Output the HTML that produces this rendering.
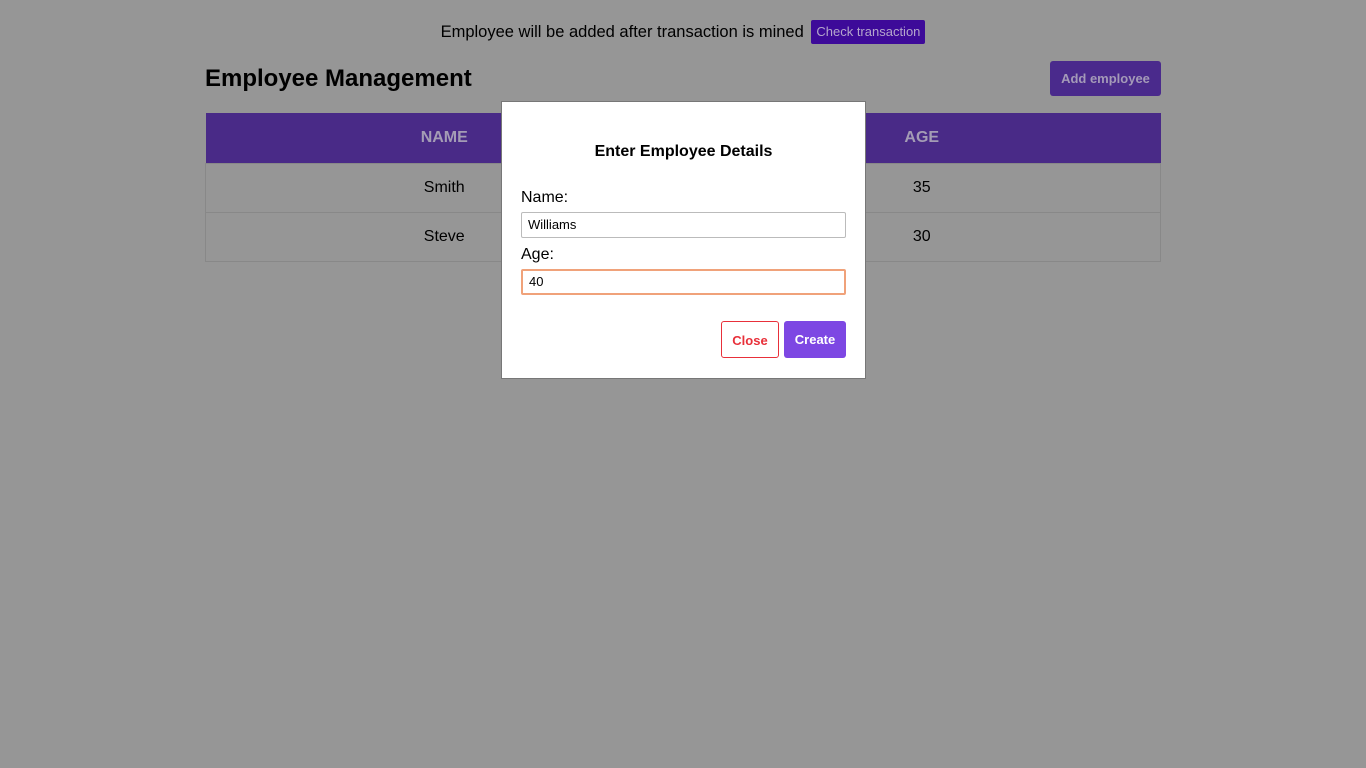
<!DOCTYPE html>
<html><head><meta charset="utf-8"><style>
html,body{margin:0;padding:0;width:1366px;height:768px;background:#969696;font-family:"Liberation Sans",sans-serif;overflow:hidden;position:relative}
.top{position:absolute;top:20px;left:0;width:1366px;text-align:center;font-size:16.5px;color:#000;line-height:25px}
.top .btn{display:inline-block;background:#3d0a99;color:#b4a6cc;font-size:13px;padding:0 5px;height:24px;line-height:24px;border-radius:2px;margin-left:3px;vertical-align:top}
h1{position:absolute;left:205px;top:64px;margin:0;font-size:24px;font-weight:bold;color:#000;line-height:30px}
.add{position:absolute;left:1050px;top:61px;width:111px;height:35px;background:#4a2a8c;color:#a49ab8;border-radius:3px;font-size:13px;font-weight:bold;text-align:center;line-height:35px}
table{position:absolute;left:205px;top:113px;width:956px;border-collapse:collapse}
th{background:#492a87;color:#a49cb5;height:50px;font-size:16px;font-weight:bold;width:50%;padding:0}
td{height:48px;text-align:center;font-size:16px;color:#000;border:1px solid #888;padding:0}
.modal{position:absolute;left:501px;top:101px;width:363px;height:276px;background:#fff;border:1px solid #777}
.modal h2{margin:0;position:absolute;top:41px;left:0;width:100%;text-align:center;font-size:16px;font-weight:bold}
label{position:absolute;left:19px;font-size:16px;color:#000}
.inp{position:absolute;left:19px;width:317px;height:24px;border:1px solid #bbb;border-radius:2px;font-size:13px;line-height:24px;padding-left:6px;box-sizing:content-box}
.b{position:absolute;top:219px;height:37px;border-radius:3px;font-size:13px;font-weight:bold;text-align:center;line-height:37px;box-sizing:border-box}
</style></head><body>
<div class="top">Employee will be added after transaction is mined <span class="btn">Check transaction</span></div>
<h1>Employee Management</h1>
<div class="add">Add employee</div>
<table><tr><th>NAME</th><th>AGE</th></tr>
<tr><td>Smith</td><td>35</td></tr>
<tr><td>Steve</td><td>30</td></tr></table>
<div class="modal">
<h2>Enter Employee Details</h2>
<label style="top:87px">Name:</label>
<div class="inp" style="top:110px">Williams</div>
<label style="top:144px">Age:</label>
<div class="inp" style="top:167px;border:2px solid #f0a27a;height:22px;line-height:22px;width:315px">40</div>
<div class="b" style="left:219px;width:58px;border:1px solid #e8303a;color:#e8303a">Close</div>
<div class="b" style="left:282px;width:62px;background:#7d47e3;color:#fff">Create</div>
</div>
</body></html>
